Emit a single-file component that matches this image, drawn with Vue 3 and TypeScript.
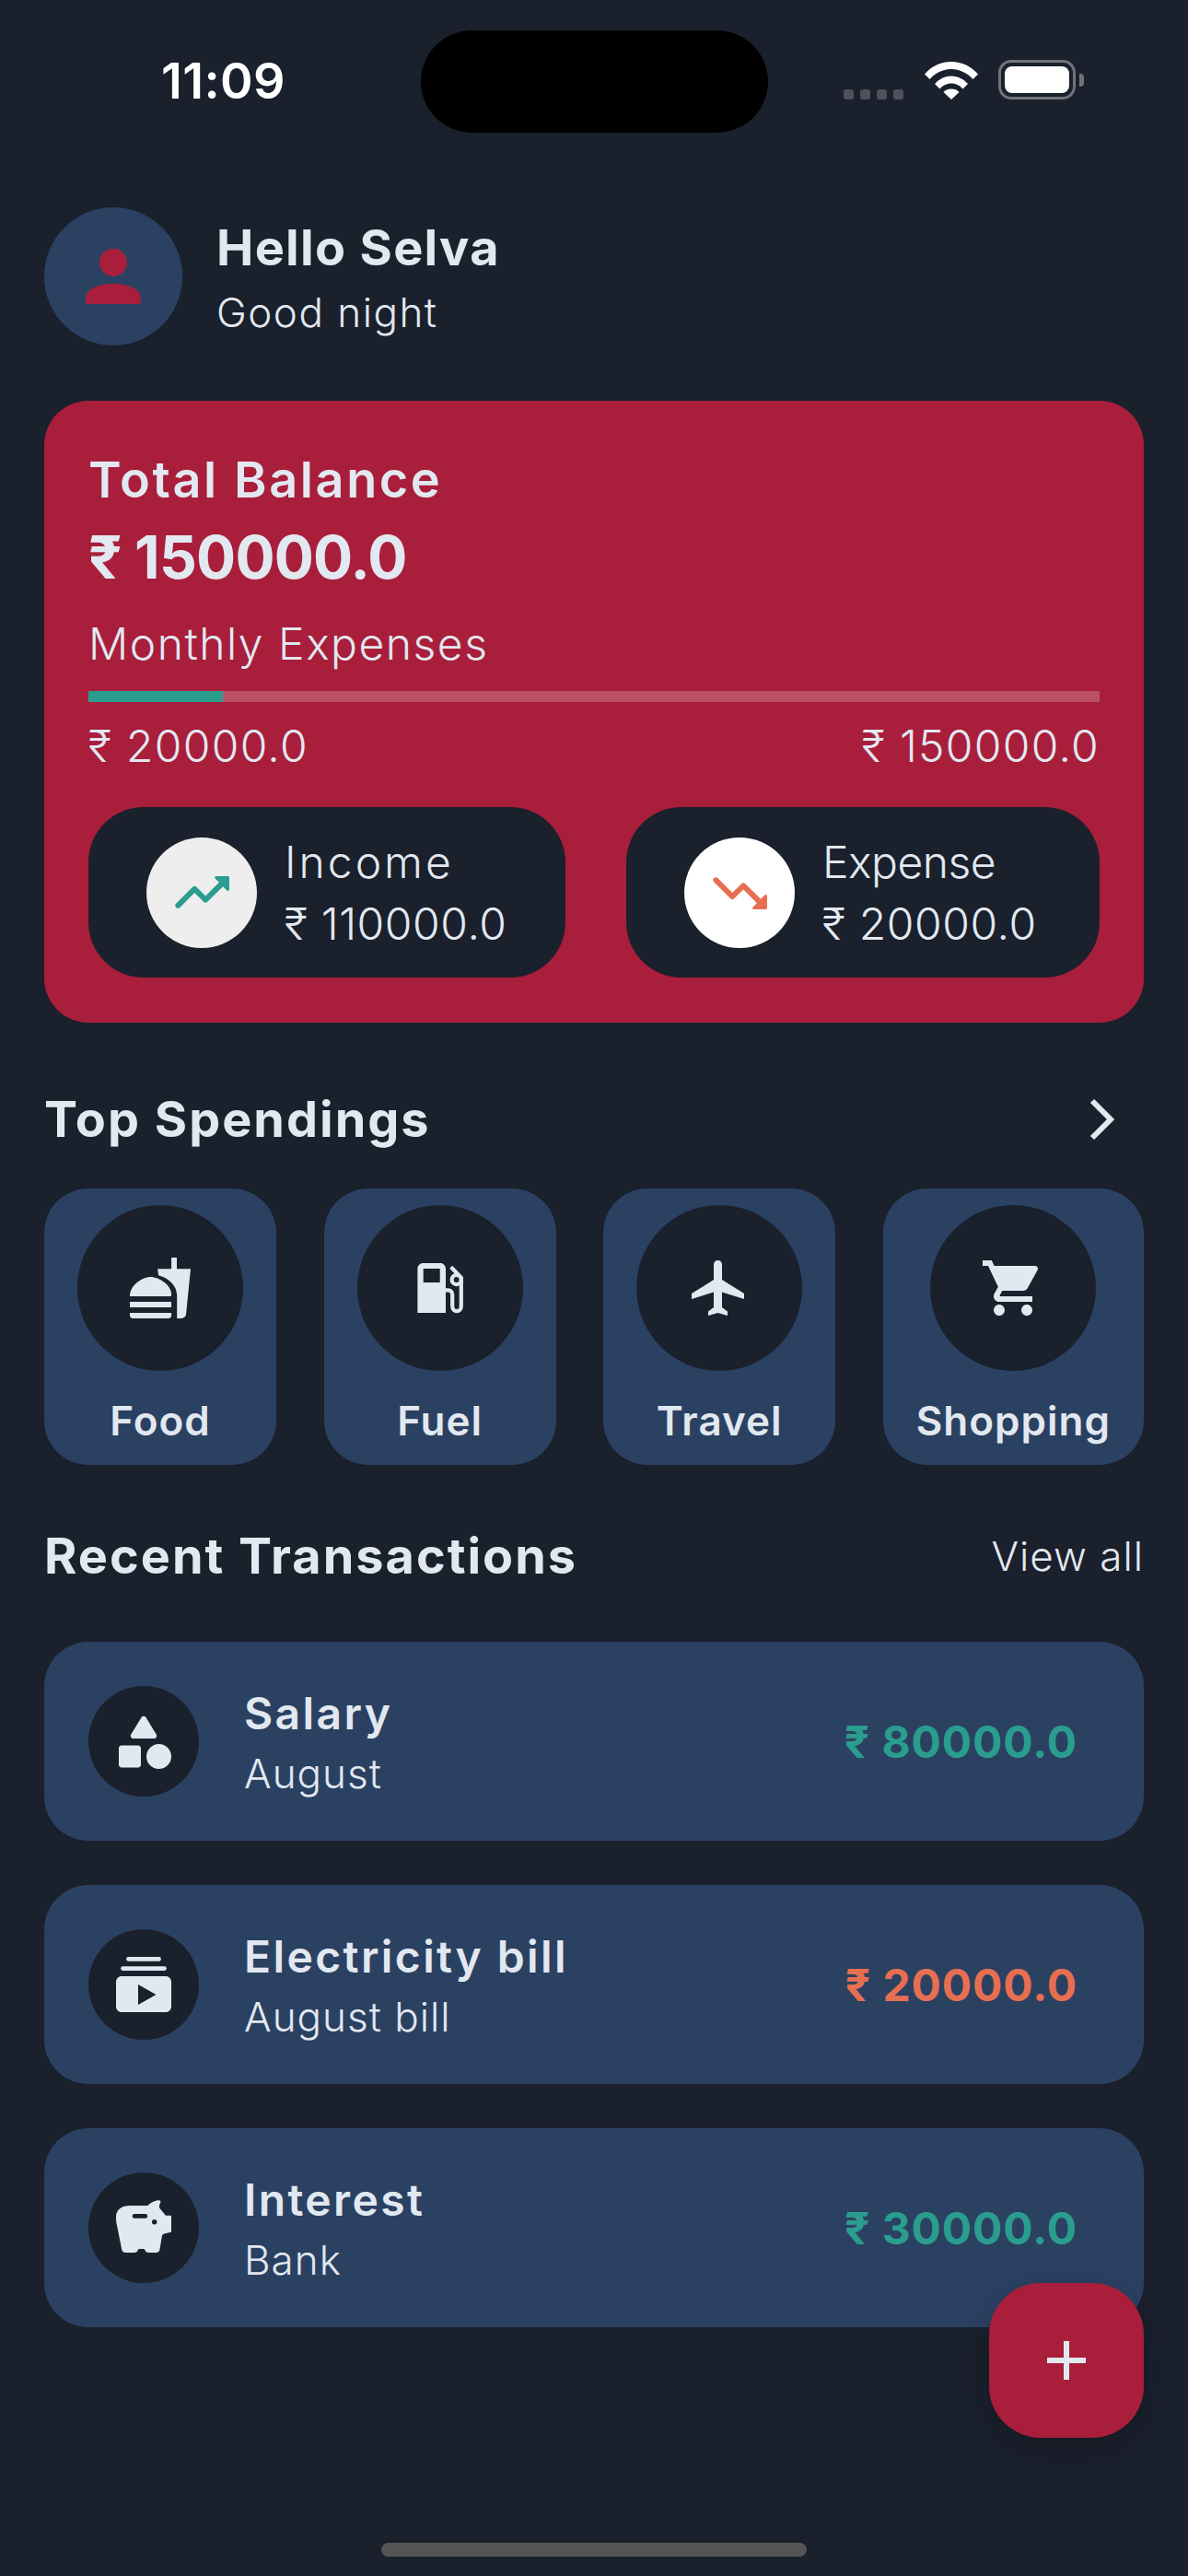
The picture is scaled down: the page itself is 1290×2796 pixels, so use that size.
<script setup lang="ts">
const spendings = [
  { name: 'Food', paths: ['M18.06 22.99h1.66c.84 0 1.53-.64 1.63-1.46L23 5.05h-5V1h-1.97v4.05h-4.97l.3 2.34c1.71.47 3.31 1.32 4.27 2.26 1.44 1.42 2.43 2.89 2.43 5.29v8.05zM1 21.99V21h15.03v.99c0 .55-.45 1-1.01 1H2.01c-.56 0-1.01-.45-1.01-1zm15.03-7c.5-4-4.52-6.99-7.52-7-3 0-7.51 3-7.51 7h15.03zM1.02 17h15v2h-15z'] },
  {
    name: 'Fuel',
    paths: [
      'M3.8 21V5c0-1.1.9-2 2-2H12c1.1 0 2 .9 2 2v16zM5.9 5v5h6V5z',
      'M17.9 6.6a2.4 2.4 0 1 0 0 4.8 2.4 2.4 0 0 0 0-4.800zm0 1.400a1 1 0 1 1 0 2 1 1 0 0 1 0-2z',
    ],
    hose: 'M14 12.800h.8c1 0 1.600.7 1.600 1.600v4.200c0 2.400 3.200 2.400 3.200 0V8.300L15.900 4.400',
  },
  { name: 'Travel', paths: ['M21 16v-2l-8-5V3.5c0-.83-.67-1.5-1.5-1.5S10 2.67 10 3.5V9l-8 5v2l8-2.5V19l-2 1.5V22l3.5-1 3.5 1v-1.5L13 19v-5.5l8 2.5z'] },
  { name: 'Shopping', paths: ['M7 18c-1.1 0-1.99.9-1.99 2S5.9 22 7 22s2-.9 2-2-.9-2-2-2zM1 2v2h2l3.6 7.59-1.35 2.45c-.16.28-.25.61-.25.96 0 1.1.9 2 2 2h12v-2H7.42c-.14 0-.25-.11-.25-.25l.03-.12.9-1.63h7.45c.75 0 1.41-.41 1.75-1.03l3.58-6.49c.08-.14.12-.31.12-.48 0-.55-.45-1-1-1H5.21l-.94-2H1zm16 16c-1.1 0-1.99.9-1.99 2s.89 2 1.99 2 2-.9 2-2-.9-2-2-2z'] },
]

const transactions = [
  {
    title: 'Salary',
    sub: 'August',
    amount: '₹ 80000.0',
    income: true,
    path: 'M11.15 3.4L7.43 9.48c-.41.66.07 1.52.85 1.52h7.43c.78 0 1.26-.86.85-1.52L12.85 3.4c-.39-.64-1.31-.64-1.7 0zM13 17.5a4.5 4.5 0 1 0 9 0 4.5 4.5 0 0 0-9 0zM4 21.5h6c.55 0 1-.45 1-1v-6c0-.55-.45-1-1-1H4c-.55 0-1 .45-1 1v6c0 .55.45 1 1 1z',
  },
  {
    title: 'Electricity bill',
    sub: 'August bill',
    amount: '₹ 20000.0',
    income: false,
    path: 'M6.5 2h11a.5.5 0 0 1 0 1.6h-11a.5.5 0 0 1 0-1.6zM4.5 5.4h15a.7.7 0 0 1 0 1.6h-15a.7.7 0 0 1 0-1.6zM4 9h16c1.1 0 2 .9 2 2v9c0 1.1-.9 2-2 2H4c-1.1 0-2-.9-2-2v-9c0-1.1.9-2 2-2zm6 3v7.3l6.5-3.6z',
  },
  {
    title: 'Interest',
    sub: 'Bank',
    amount: '₹ 30000.0',
    income: true,
    path: 'M7 4h6.5C14.5 3 16 2.1 17.6 2.1c.5 0 .7.5.4 1-.3.5-.4 1.1-.3 1.7L20 7.6h2v6l-2.6.6c-.5.1-.7.5-.8 1L17.8 20c-.2.6-.6 1-1.3 1h-2.800c-.6 0-1-.4-1.300-1l-.2-.3h-2l-.2.3c-.3.6-.7 1-1.300 1H5.500c-.7 0-1.200-.4-1.400-1L2.300 11C2 9.900 2 8.900 2 8c0-2.500 2-4 5-4zM8.700 7a.8.8 0 0 0 0 1.600h3.900a.8.8 0 0 0 0-1.600zM15.900 9a.9.9 0 1 0 0 1.800.9.9 0 0 0 0-1.800z',
  },
]

const spent = 20000
const budget = 150000
const progress = `${(spent / budget) * 100}%`
</script>

<template>
  <div class="screen">
    <header class="status">
      <span class="time">11:09</span>
      <div class="island"></div>
      <div class="status-icons">
        <div class="signal"><i></i><i></i><i></i><i></i></div>
        <svg class="wifi" width="58" height="42" viewBox="0 0 58 42">
          <path d="M0 14.500C7.500 6 17.500 1 29 1s21.500 5 29 13.500l-5.500 5.500C46 13 38 9 29 9S12 13 5.500 20z" fill="#fff" />
          <path d="M11 25c4.500-5 11-8.500 18-8.500S42.500 20 47 25l-5.500 5.500C38.500 27 34 24.500 29 24.500S19.500 27 16.500 30.500z" fill="#fff" />
          <path d="M20.500 34c2-2.500 5-3.500 8.500-3.500s6.500 1 8.500 3.500L29 42z" fill="#fff" />
        </svg>
        <div class="battery"><div class="battery-fill"></div></div>
        <div class="battery-tip"></div>
      </div>
    </header>

    <section class="greeting">
      <div class="avatar">
        <svg width="60" height="60" viewBox="0 0 60 60">
          <ellipse cx="30" cy="15" rx="15" ry="15" fill="#a91e3b" />
          <path d="M0 58v-4C0 44 14 38 30 38s30 6 30 16v4a2 2 0 0 1-2 2H2a2 2 0 0 1-2-2z" fill="#a91e3b" />
        </svg>
      </div>
      <div class="greeting-text">
        <h1 class="hello">Hello Selva</h1>
        <p class="night">Good night</p>
      </div>
    </section>

    <section class="balance">
      <div class="balance-label">Total Balance</div>
      <div class="balance-amount">₹ 150000.0</div>
      <div class="monthly">Monthly Expenses</div>
      <div class="track"><div class="track-fill" :style="{ width: progress }"></div></div>
      <div class="limits">
        <span>₹ 20000.0</span>
        <span>₹ 150000.0</span>
      </div>
      <div class="pills">
        <div class="pill pill-income">
          <div class="pill-icon pill-icon-soft">
            <svg width="72" height="72" viewBox="0 0 24 24"><path fill="#2a9d8f" d="M16.850 6.850l1.440 1.440-4.880 4.880-3.290-3.290c-.39-.39-1.020-.39-1.410 0l-6 6.010c-.39.39-.39 1.020 0 1.410.39.39 1.020.39 1.410 0L9.410 12l3.290 3.290c.39.39 1.020.39 1.410 0l5.590-5.580 1.440 1.440c.31.31.85.09.85-.35V6.500c.01-.28-.21-.5-.49-.5h-4.290c-.45 0-.67.54-.36.85z" /></svg>
          </div>
          <div class="pill-text">
            <div class="label-income">Income</div>
            <div class="pill-amount">₹ 110000.0</div>
          </div>
        </div>
        <div class="pill pill-expense">
          <div class="pill-icon">
            <svg width="72" height="72" viewBox="0 0 24 24"><path fill="#e76f51" d="M16.850 17.150l1.440-1.440-4.880-4.880-3.290 3.290c-.39.39-1.020.39-1.410 0l-6-6.010c-.39-.39-.39-1.020 0-1.410.39-.39 1.020-.39 1.410 0L9.410 12l3.290-3.290c.39-.39 1.020-.39 1.410 0l5.590 5.580 1.440-1.440c.31-.31.85-.09.85.35v4.290c0 .28-.22.5-.5.5h-4.290c-.45.01-.67-.53-.36-.84z" /></svg>
          </div>
          <div class="pill-text">
            <div class="label-expense">Expense</div>
            <div class="pill-amount">₹ 20000.0</div>
          </div>
        </div>
      </div>
    </section>

    <div class="section-head spend-head">
      <h2 class="section-title">Top Spendings</h2>
      <svg width="30" height="46" viewBox="0 0 30 46"><path d="M4 3l20 20L4 43" fill="none" stroke="#e2e8f0" stroke-width="6" /></svg>
    </div>

    <div class="spendings">
      <div v-for="item in spendings" :key="item.name" class="spend-card">
        <div class="spend-circle">
          <svg width="72" height="72" viewBox="0 0 24 24">
            <path v-for="d in item.paths" :key="d" :d="d" fill="#e2e8f0" fill-rule="evenodd" />
            <path v-if="item.hose" :d="item.hose" fill="none" stroke="#e2e8f0" stroke-width="1.4" />
          </svg>
        </div>
        <span class="spend-name">{{ item.name }}</span>
      </div>
    </div>

    <div class="section-head recent-head">
      <h2 class="section-title">Recent Transactions</h2>
      <span class="view-all">View all</span>
    </div>

    <div class="transactions">
      <div v-for="tx in transactions" :key="tx.title" class="tx-card">
        <div class="tx-circle">
          <svg width="72" height="72" viewBox="0 0 24 24"><path :d="tx.path" fill="#e2e8f0" fill-rule="evenodd" /></svg>
        </div>
        <div class="tx-text">
          <div class="tx-title">{{ tx.title }}</div>
          <div class="tx-sub">{{ tx.sub }}</div>
        </div>
        <div class="tx-amount" :class="tx.income ? 'is-income' : 'is-expense'">{{ tx.amount }}</div>
      </div>
    </div>

    <div class="home-bar"></div>

    <button class="fab" type="button">
      <svg width="42" height="42" viewBox="0 0 42 42"><path d="M21 0v42M0 21h42" stroke="#e2e8f0" stroke-width="6" /></svg>
    </button>
  </div>
</template>

<style>
html,
body {
  margin: 0;
  background: #1a202c;
}
</style>

<style scoped>
.screen {
  position: relative;
  width: 1290px;
  height: 2796px;
  overflow: hidden;
  display: flex;
  flex-direction: column;
  padding: 0 48px;
  box-sizing: border-box;
  background: #1a202c;
  color: #e2e8f0;
  font-family: Inter, "Noto Sans", sans-serif;
}
h1,
h2,
p {
  margin: 0;
}

/* status bar */
.status {
  position: relative;
  height: 111px;
  margin-top: 33px;
  display: flex;
  align-items: center;
  justify-content: center;
}
.time {
  position: absolute;
  left: 127px;
  top: 22px;
  font-size: 54px;
  line-height: 66px;
  font-weight: 600;
  color: #fff;
  letter-spacing: 0.4px;
}
.island {
  width: 377px;
  height: 111px;
  border-radius: 56px;
  background: #000;
}
.status-icons {
  position: absolute;
  left: 868px;
  top: 32px;
  display: flex;
  align-items: flex-end;
  height: 43px;
}
.signal {
  display: flex;
  gap: 7px;
  margin-right: 23px;
}
.signal i {
  width: 11px;
  height: 11px;
  border-radius: 3px;
  background: #4d525c;
}
.wifi {
  margin-right: 22px;
}
.battery {
  width: 84px;
  height: 43px;
  box-sizing: border-box;
  padding: 4px;
  border: 3px solid #6f737b;
  border-radius: 14px;
}
.battery-fill {
  height: 100%;
  border-radius: 8px;
  background: #fff;
}
.battery-tip {
  align-self: center;
  width: 5px;
  height: 14px;
  margin-left: 4px;
  border-radius: 0 4px 4px 0;
  background: #6f737b;
}

/* greeting */
.greeting {
  display: flex;
  align-items: center;
  gap: 37px;
  margin-top: 81px;
  height: 150px;
}
.greeting-text {
  padding-top: 5px;
}
.avatar {
  width: 150px;
  height: 150px;
  border-radius: 50%;
  background: #2b4162;
  display: flex;
  align-items: center;
  justify-content: center;
}
.avatar svg {
  display: block;
}
.hello {
  font-size: 54px;
  line-height: 68px;
  font-weight: 700;
  letter-spacing: 1.3px;
}
.night {
  margin-top: 5px;
  font-size: 44px;
  line-height: 62px;
  font-weight: 300;
  letter-spacing: 1.5px;
}

/* balance card */
.balance {
  margin-top: 60px;
  height: 675px;
  box-sizing: border-box;
  padding: 48px;
  border-radius: 48px;
  background: #a91e3b;
}
.balance-label {
  margin-top: 6px;
  font-size: 54px;
  line-height: 64px;
  font-weight: 600;
  letter-spacing: 2.6px;
}
.balance-amount {
  margin-top: 13px;
  font-size: 64px;
  line-height: 78px;
  font-weight: 700;
  letter-spacing: -0.8px;
}
.monthly {
  margin-top: 24px;
  font-size: 48px;
  line-height: 62px;
  font-weight: 300;
  letter-spacing: 1.5px;
}
.track {
  margin-top: 20px;
  height: 12px;
  background: #bb5169;
}
.track-fill {
  height: 100%;
  background: #2a9d8f;
}
.limits {
  display: flex;
  justify-content: space-between;
  margin-top: 17px;
  font-size: 48px;
  line-height: 62px;
  font-weight: 300;
  letter-spacing: 1.3px;
}
.pills {
  display: flex;
  justify-content: space-between;
  margin-top: 35px;
}
.pill {
  height: 185px;
  box-sizing: border-box;
  display: flex;
  align-items: center;
  gap: 30px;
  border-radius: 60px;
  background: #1a202c;
}
.pill-income {
  width: 518px;
  padding-left: 63px;
}
.pill-expense {
  width: 514px;
  padding-left: 63px;
}
.pill-icon {
  width: 120px;
  height: 120px;
  border-radius: 50%;
  background: #fff;
  display: flex;
  align-items: center;
  justify-content: center;
}
.pill-icon-soft {
  background: #eee;
}
.pill-text {
  font-size: 48px;
  line-height: 67px;
  font-weight: 300;
  white-space: nowrap;
}
.label-income {
  letter-spacing: 3px;
}
.label-expense {
  letter-spacing: -0.5px;
}
.pill-amount {
  letter-spacing: 0.6px;
}

/* section headers */
.section-head {
  display: flex;
  align-items: center;
  justify-content: space-between;
}
.section-title {
  font-size: 54px;
  line-height: 70px;
  font-weight: 700;
  letter-spacing: 2px;
}
.spend-head {
  margin-top: 70px;
  padding-right: 30px;
}
.recent-head {
  margin-top: 64px;
}
.view-all {
  font-size: 44px;
  font-weight: 300;
  letter-spacing: 1px;
}

/* top spendings */
.spendings {
  display: flex;
  justify-content: space-between;
  margin-top: 40px;
}
.spend-card {
  height: 300px;
  box-sizing: border-box;
  padding: 18px 36px 0;
  border-radius: 48px;
  background: #2b4162;
  display: flex;
  flex-direction: column;
  align-items: center;
}
.spend-circle {
  width: 180px;
  height: 180px;
  border-radius: 50%;
  background: #1a202c;
  display: flex;
  align-items: center;
  justify-content: center;
}
.spend-name {
  margin-top: 29px;
  font-size: 44px;
  line-height: 50px;
  font-weight: 600;
  letter-spacing: 1px;
  white-space: nowrap;
}

/* transactions */
.transactions {
  display: flex;
  flex-direction: column;
  gap: 48px;
  margin-top: 58px;
}
.tx-card {
  height: 216px;
  box-sizing: border-box;
  padding: 0 72px 0 48px;
  border-radius: 48px;
  background: #2b4162;
  display: flex;
  align-items: center;
}
.tx-circle {
  width: 120px;
  height: 120px;
  border-radius: 50%;
  background: #1a202c;
  display: flex;
  align-items: center;
  justify-content: center;
  flex-shrink: 0;
}
.tx-text {
  flex: 1;
  margin-left: 49px;
  padding-top: 2px;
}
.tx-title {
  font-size: 48px;
  line-height: 64px;
  font-weight: 600;
  letter-spacing: 2.4px;
}
.tx-sub {
  margin-top: 4px;
  font-size: 44px;
  line-height: 58px;
  font-weight: 300;
  letter-spacing: 1px;
}
.tx-amount {
  font-size: 48px;
  font-weight: 700;
  letter-spacing: 0.9px;
}
.is-income {
  color: #2a9d8f;
}
.is-expense {
  color: #e76f51;
}

/* bottom */
.home-bar {
  align-self: center;
  width: 462px;
  height: 15px;
  margin-top: auto;
  margin-bottom: 21px;
  border-radius: 8px;
  background: #555;
}
.fab {
  position: absolute;
  right: 48px;
  bottom: 150px;
  width: 168px;
  height: 168px;
  padding: 0;
  border: 0;
  border-radius: 56px;
  background: #a91e3b;
  box-shadow: 0 12px 36px rgba(0, 0, 0, 0.18);
  display: flex;
  align-items: center;
  justify-content: center;
}
</style>
